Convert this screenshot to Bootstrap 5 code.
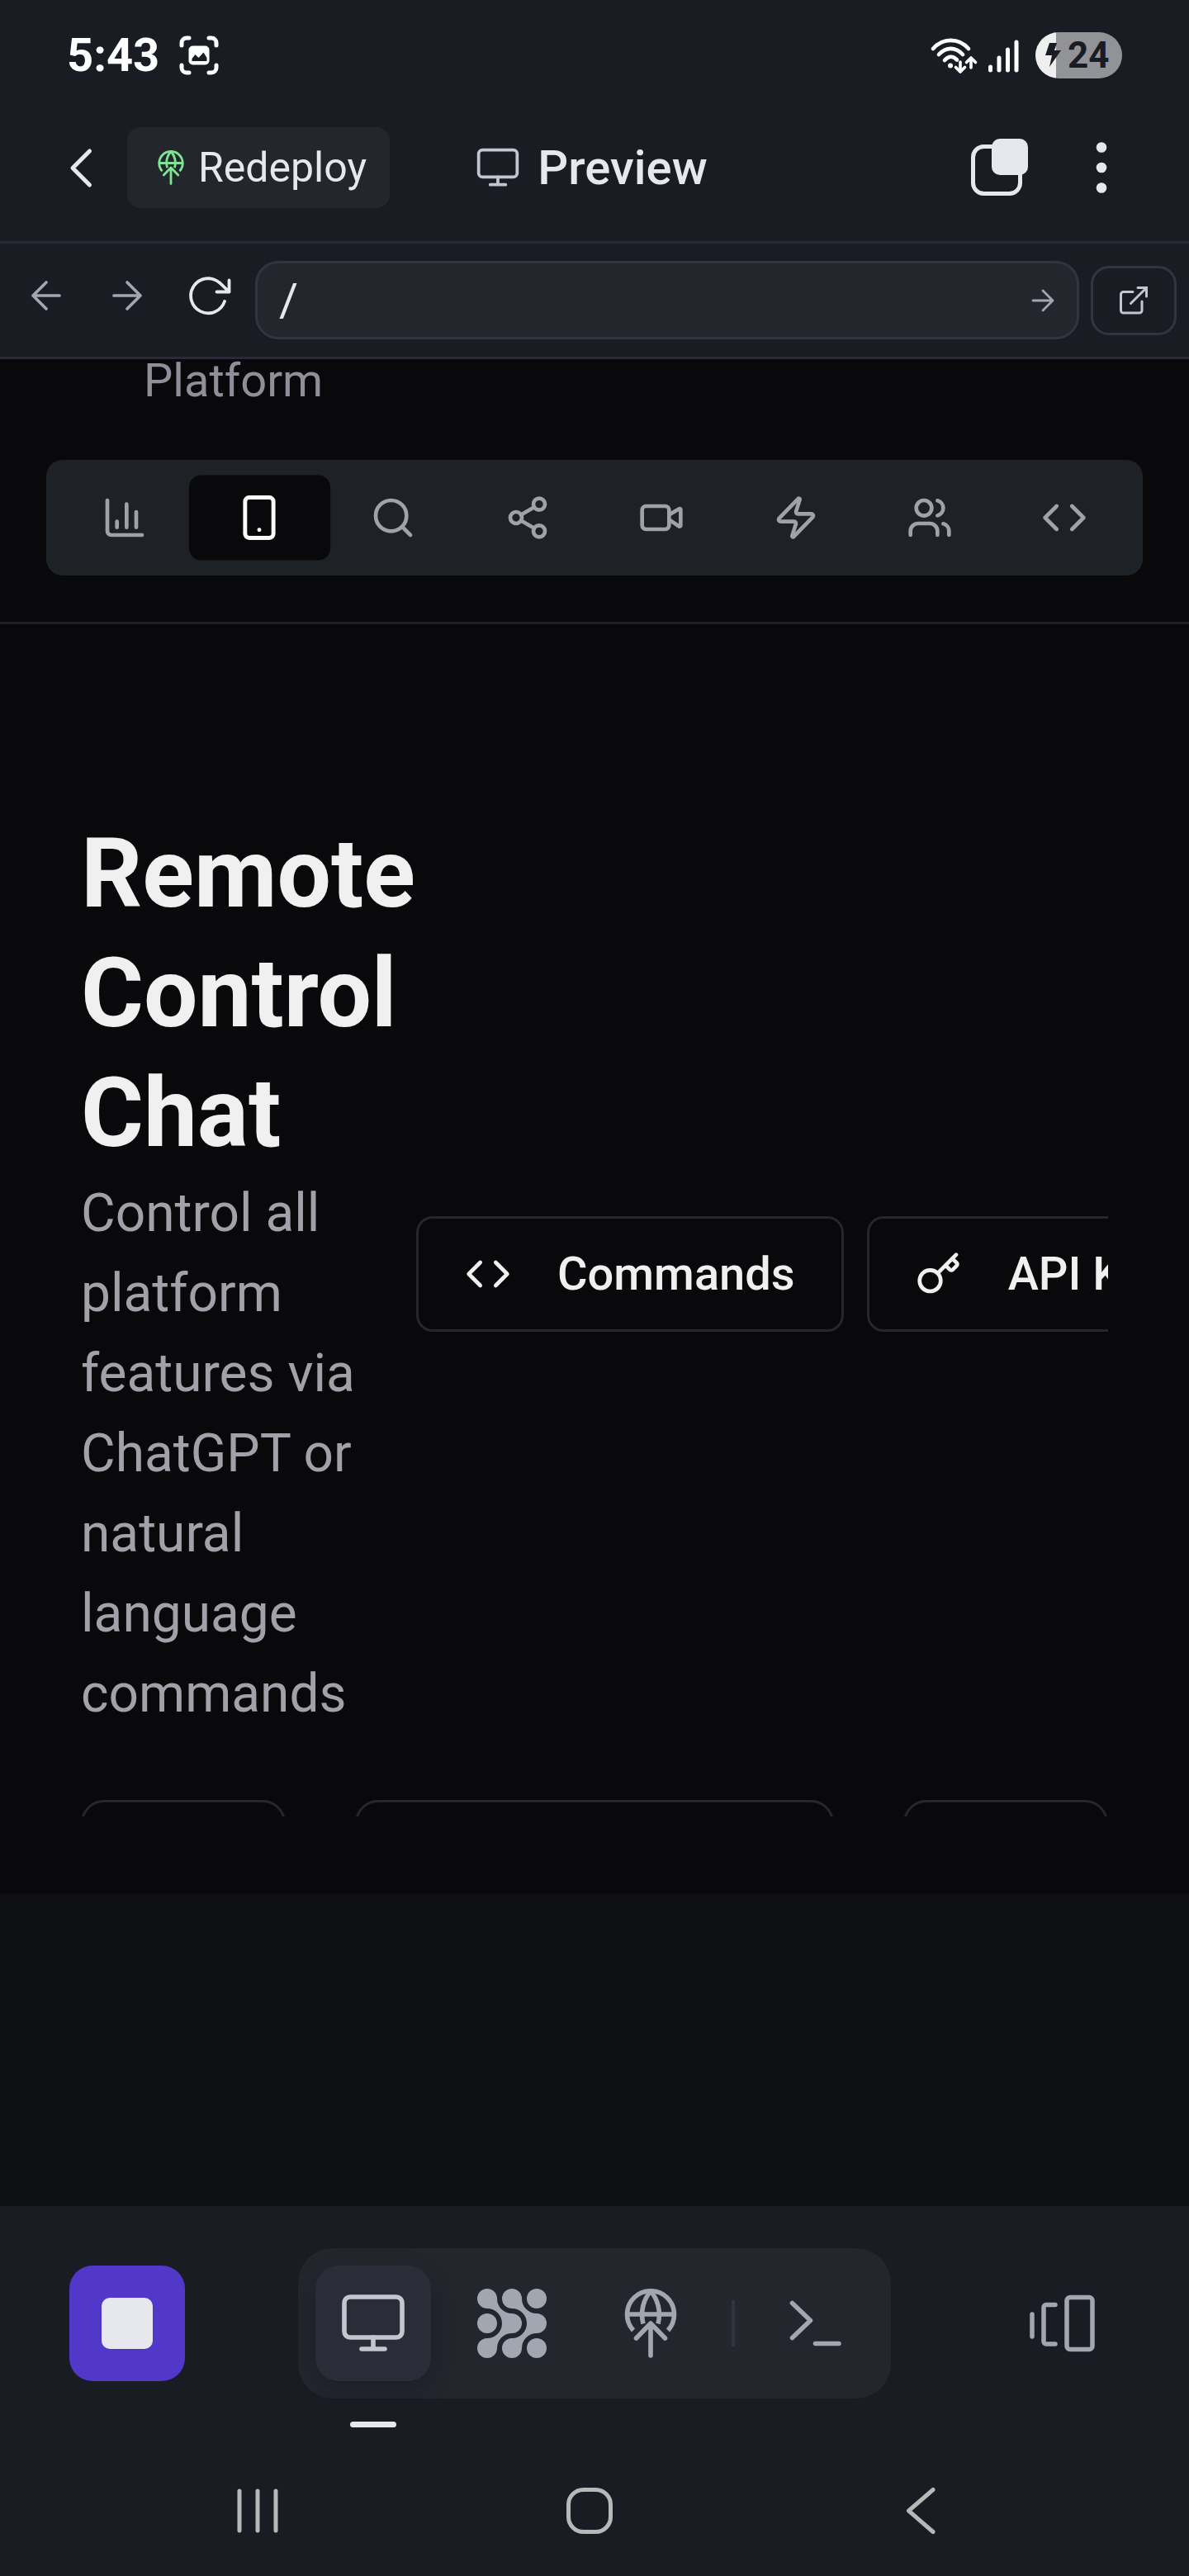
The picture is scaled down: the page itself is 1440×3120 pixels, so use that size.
<!DOCTYPE html>
<html lang="en" data-bs-theme="dark">
<head>
<meta charset="utf-8">
<meta name="viewport" content="width=device-width, initial-scale=1">
<title>Preview</title>
<link href="https://cdn.jsdelivr.net/npm/bootstrap@5.3.0/dist/css/bootstrap.min.css" rel="stylesheet">
<style>
  :root { --chrome:#1a1c24; --raised:#24262e; --line:#282a35; --outline:#32343f; --ink:#e6e8ee; --soft:#c3c6cf; --dim:#a1a6b1; --page:#09090b; }
  body { font-family: Roboto, "Liberation Sans", sans-serif; background:#0e0f11; color:var(--ink); font-size:56px; line-height:1; }
  svg { display:block; flex:none; }
  .stroked { fill:none; stroke:currentColor; stroke-linecap:round; stroke-linejoin:round; }
  .i56 { width:56px; height:56px; }
  .i84 { width:84px; height:84px; }
  .plain { border:0; padding:0; background:none; color:inherit; display:flex; align-items:center; justify-content:center; }
  .chrome { background:var(--chrome); }

  .status { height:134px; padding:0 81px; color:#fff; }
  .clock { font-weight:700; }
  .battery { width:105px; height:56px; margin-left:20px; border-radius:28px; background:linear-gradient(90deg,#efefef 25px,#929397 25px); color:var(--chrome); font-size:44px; font-weight:700; padding-left:11px; gap:8px; }

  .topbar { padding:20px 78px 40px 70px; border-bottom:3px solid var(--line); }
  .topbar .side { flex:1 1 0; }
  .side-left { gap:28px; }
  .side-right { gap:60px; }
  .redeploy { height:98px; gap:12px; padding:0 28px 0 32px; border:0; border-radius:16px; background:var(--raised); color:var(--ink); font-size:50px; line-height:1; }
  .redeploy svg { width:42px; height:42px; color:#7ee494; }
  .pane-title { font-size:58px; font-weight:500; margin:0; gap:20px; line-height:1; color:var(--ink); }
  .pane-title svg { color:var(--soft); }

  .urlbar { padding:21px 15px 21px 28px; border-bottom:3px solid var(--line); gap:14px; }
  .history { gap:42px; padding:0 15px 12px 0; color:var(--dim); }
  .history .reload { color:var(--ink); }
  .address { height:95px; border:3px solid var(--outline); border-radius:28px; background:var(--raised); padding:0 18px 0 26px; }
  .address input { border:0; outline:0; background:none; color:var(--ink); font-size:56px; line-height:64px; padding:0; min-width:0; }
  .address .plain { color:var(--dim); }
  .popout { width:104px; height:84px; border:3px solid var(--outline); border-radius:22px; color:var(--soft); }

  .site { background:var(--page); }
  .site-head { padding:0 56px 56px; border-bottom:3px solid #1e2024; }
  .tagline { margin:0 0 70px; padding-left:118px; font-size:56px; line-height:52px; color:#8f8f99; }
  .tabs { height:140px; padding:0 14px; border-radius:20px; background:#1e2125; color:#a1a1aa; }
  .tabs button { flex:1 1 0; height:98px; border-radius:14px; }
  .tabs .on { background:var(--page); color:#fafafa; transform:scale(1.05); }

  .hero { padding:230px 98px 94px; }
  .hero-row { overflow:hidden; }
  .hero-copy { width:406px; flex:none; }
  .hero h1 { font-size:116px; line-height:145px; font-weight:700; color:#f0f0f0; margin:0; }
  .hero p { font-size:64px; line-height:97px; color:#a1a1aa; margin:0; }
  .hero-actions { gap:28px; }
  .act { height:140px; padding:0 56px; gap:56px; border:3px solid #27272a; border-radius:20px; background:none; color:#f0f0f0; font-size:56px; font-weight:500; line-height:1; white-space:nowrap; flex:none; }
  .panels { margin-top:80px; height:20px; overflow:hidden; gap:84px; }
  .panel { height:120px; border:3px solid #27272a; border-radius:28px; flex:0 0 248px; }
  .panel-wide { flex:1 1 0; }

  .tools { padding:51px 84px 57px; }
  .sq { width:140px; height:140px; border-radius:28px; color:var(--dim); }
  .stop { background:#5138c8; }
  .dock { padding:21px; gap:28px; border-radius:42px; background:var(--raised); }
  .dock .on { position:relative; background:#2b2c37; color:var(--soft); box-shadow:0 10px 28px rgba(14,14,22,.3); }
  .dock .on::after { content:""; position:absolute; left:42px; top:189px; width:56px; height:7px; border-radius:4px; background:var(--ink); }
  .rule { width:4px; height:56px; background:var(--outline); }
  .sysnav { height:158px; padding:0 123px 0 111px; color:#b8b8b8; }
  .sysnav button { flex:1 1 0; height:100%; }
</style>
<script defer src="https://cdn.jsdelivr.net/npm/bootstrap@5.3.0/dist/js/bootstrap.bundle.min.js"></script>
</head>
<body class="d-flex flex-column min-vh-100">

<svg class="d-none" aria-hidden="true">
  <symbol id="globe-up" viewBox="0 0 84 84"><g class="stroked" stroke-width="5.6"><path d="M21 50.500A28.500 28.500 0 1 1 63 50.500" stroke-linecap="butt"/><path d="M33 42.500C29 27 34 12 42 3C50 12 55 27 51 42.500" stroke-linecap="butt"/><path d="M14 31H70"/><path d="M42 81V43M24.500 60L42 42L59.500 60"/></g></symbol>
  <symbol id="monitor" viewBox="0 0 84 84"><g class="stroked" stroke-width="5.600"><rect x="7" y="10" width="70" height="49" rx="7"/><path d="M42 59V73M28 73H56"/></g></symbol>
  <symbol id="code" viewBox="0 0 24 24"><path class="stroked" stroke-width="2" d="M16 18l6-6-6-6M8 6l-6 6 6 6"/></symbol>
</svg>

<div class="chrome">
  <div class="status d-flex justify-content-between align-items-center">
    <div class="d-flex align-items-center gap-4">
      <span class="clock">5:43</span>
      <svg width="48" height="48" viewBox="0 0 48 48" role="img" aria-label="Screenshot saved"><path class="stroked" stroke-width="5" d="M3 12V9a6 6 0 0 1 6-6h3M36 3h3a6 6 0 0 1 6 6v3M45 36v3a6 6 0 0 1-6 6h-3M12 45H9a6 6 0 0 1-6-6v-3"/><rect x="11.500" y="12.500" width="25" height="23" rx="5" fill="currentColor"/><path fill="#1a1c24" d="M15.500 31v-3l4-5 4 4 6-6.500 4 6.500v4z"/></svg>
    </div>
    <div class="d-flex align-items-center">
      <svg class="me-2" width="62" height="46" viewBox="0 0 62 46" role="img" aria-label="Wi-Fi"><g class="stroked" stroke-width="4.600"><path d="M4 15C16 1.500 35 1.500 47 15M11 22C20 12.500 31 12.500 40 22M18 29C23 23.500 28 23.500 33 28.500"/><g stroke-width="3.600"><path d="M37 31V42M31.500 37.500l5.500 5.500 5.500-5.500M50 38V27M44.500 31.500L50 26l5.500 5.500"/></g></g><circle cx="25" cy="35.500" r="3" fill="currentColor"/></svg>
      <svg width="38" height="46" viewBox="0 0 38 46" role="img" aria-label="Signal"><path class="stroked" stroke-width="5" d="M3.500 37v4M14 26v15M24.500 16v25M35 7v34"/></svg>
      <div class="battery d-flex align-items-center">
        <svg width="20" height="32" viewBox="0 0 20 32" aria-hidden="true"><path fill="currentColor" d="M6 1h9l-3 9h8L6 30l3-14H1z"/></svg><span>24</span>
      </div>
    </div>
  </div>

  <header class="topbar d-flex align-items-center">
    <div class="side side-left d-flex align-items-center">
      <button class="plain" aria-label="Back"><svg class="i56 stroked" viewBox="0 0 56 56" stroke-width="5"><path d="M38.500 8L18 28.500L38.500 49"/></svg></button>
      <button class="redeploy d-flex align-items-center"><svg><use href="#globe-up"/></svg>Redeploy</button>
    </div>
    <h2 class="pane-title d-flex align-items-center"><svg class="i56"><use href="#monitor"/></svg>Preview</h2>
    <div class="side side-right d-flex align-items-center justify-content-end">
      <button class="plain" aria-label="Tabs"><svg width="70" height="70" viewBox="0 0 70 70"><rect class="stroked" x="2.500" y="9.500" width="57" height="57" rx="13" stroke-width="5"/><rect x="25" y="0" width="44" height="44" rx="10" fill="currentColor"/></svg></button>
      <button class="plain" aria-label="More"><svg width="56" height="64" viewBox="0 0 56 64" fill="currentColor"><circle cx="28" cy="7.500" r="6.300"/><circle cx="28" cy="32" r="6.300"/><circle cx="28" cy="56.500" r="6.300"/></svg></button>
    </div>
  </header>

  <div class="urlbar d-flex align-items-center">
    <div class="history d-flex">
      <button class="plain" aria-label="Go back"><svg class="i56 stroked" viewBox="0 0 56 56" stroke-width="3.700"><path d="M44 28H12M28 12L12 28L28 44"/></svg></button>
      <button class="plain" aria-label="Go forward"><svg class="i56 stroked" viewBox="0 0 56 56" stroke-width="3.700"><path d="M12 28H44M28 12L44 28L28 44"/></svg></button>
      <button class="plain reload" aria-label="Reload"><svg class="i56 stroked" viewBox="0 0 56 56" stroke-width="3.800"><path d="M48 35A21 21 0 1 1 42 12.500L53.500 23.500M38.500 23.500H53.500M53.500 9.500V23.500" stroke-linejoin="miter"/></svg></button>
    </div>
    <form class="address d-flex align-items-center flex-grow-1">
      <input class="flex-grow-1" type="text" value="/" aria-label="Page path">
      <button class="plain" type="button" aria-label="Open path"><svg width="42" height="42" viewBox="0 0 42 42" class="stroked" stroke-width="2.800"><path d="M7 21H31M19 9L31 21L19 33"/></svg></button>
    </form>
    <button class="plain popout" aria-label="Open in new tab"><svg width="42" height="42" viewBox="0 0 42 42" class="stroked" stroke-width="3"><path d="M20 10.500H8.500a3 3 0 0 0-3 3V33a3 3 0 0 0 3 3H28a3 3 0 0 0 3-3V22M17.500 24.500L36.500 5.500M26 5.500H36.500V16" stroke-linejoin="miter"/></svg></button>
  </div>
</div>

<main class="site">
  <div class="site-head">
    <p class="tagline">Platform</p>
    <nav class="tabs d-flex align-items-center" aria-label="Sections">
      <button class="plain" aria-label="Analytics"><svg class="i56 stroked" viewBox="0 0 24 24" stroke-width="2"><path d="M3 3v16a2 2 0 0 0 2 2h16M18 17V9M13 17V5M8 17v-3"/></svg></button>
      <button class="plain on" aria-label="Mobile" aria-current="page"><svg class="i56 stroked" viewBox="0 0 24 24" stroke-width="2"><rect x="5" y="2" width="14" height="20" rx="2"/><path d="M12 18h.01"/></svg></button>
      <button class="plain" aria-label="Search"><svg class="i56 stroked" viewBox="0 0 24 24" stroke-width="2"><circle cx="11" cy="11" r="8"/><path d="m21 21-4.300-4.300"/></svg></button>
      <button class="plain" aria-label="Share"><svg class="i56 stroked" viewBox="0 0 24 24" stroke-width="2"><circle cx="18" cy="5" r="3"/><circle cx="6" cy="12" r="3"/><circle cx="18" cy="19" r="3"/><path d="M8.590 13.510l6.830 3.980M15.410 6.510l-6.820 3.980"/></svg></button>
      <button class="plain" aria-label="Video"><svg class="i56 stroked" viewBox="0 0 24 24" stroke-width="2"><path d="m16 13 5.223 3.482a.5.5 0 0 0 .777-.416V7.870a.5.5 0 0 0-.752-.432L16 10.500"/><rect x="2" y="6" width="14" height="12" rx="2"/></svg></button>
      <button class="plain" aria-label="Automation"><svg class="i56 stroked" viewBox="0 0 24 24" stroke-width="2"><path d="M4 14a1 1 0 0 1-.78-1.630l9.900-10.200a.5.5 0 0 1 .86.460l-1.920 6.020A1 1 0 0 0 13 10h7a1 1 0 0 1 .78 1.630l-9.900 10.200a.5.5 0 0 1-.86-.460l1.920-6.020A1 1 0 0 0 11 14z"/></svg></button>
      <button class="plain" aria-label="Users"><svg class="i56 stroked" viewBox="0 0 24 24" stroke-width="2"><path d="M16 21v-2a4 4 0 0 0-4-4H6a4 4 0 0 0-4 4v2"/><circle cx="9" cy="7" r="4"/><path d="M22 21v-2a4 4 0 0 0-3-3.870M16 3.130a4 4 0 0 1 0 7.750"/></svg></button>
      <button class="plain" aria-label="Developer"><svg class="i56"><use href="#code"/></svg></button>
    </nav>
  </div>

  <section class="hero">
    <div class="hero-row d-flex align-items-center">
      <div class="hero-copy">
        <h1>Remote Control Chat</h1>
        <p>Control all platform features via ChatGPT or natural language commands</p>
      </div>
      <div class="hero-actions d-flex">
        <button class="act d-flex align-items-center"><svg class="i56"><use href="#code"/></svg>Commands</button>
        <button class="act d-flex align-items-center"><svg class="i56 stroked" viewBox="0 0 24 24" stroke-width="2"><path d="m15.500 7.500 2.300 2.300a1 1 0 0 0 1.400 0l2.100-2.100a1 1 0 0 0 0-1.400L19 4M21 2l-9.600 9.600"/><circle cx="7.500" cy="15.500" r="5.500"/></svg>API Keys</button>
      </div>
    </div>
    <div class="panels d-flex">
      <div class="panel"></div>
      <div class="panel panel-wide"></div>
      <div class="panel"></div>
    </div>
  </section>
</main>

<footer class="chrome mt-auto">
  <div class="tools d-flex align-items-center justify-content-between">
    <button class="plain sq stop" aria-label="Stop"><svg width="62" height="62" viewBox="0 0 62 62"><rect width="62" height="62" rx="10" fill="#e6e8ee"/></svg></button>
    <div class="dock d-flex align-items-center">
      <button class="plain sq on" aria-label="Preview"><svg class="i84"><use href="#monitor"/></svg></button>
      <button class="plain sq" aria-label="Agent"><svg class="i84" viewBox="0 0 84 84" fill="currentColor"><path d="M24 12A18 18 0 0 0 42 30A12 12 0 0 1 42 54A18 18 0 0 0 24 72A12 12 0 1 1 12 60A18 18 0 0 0 30 42A18 18 0 0 0 12 24A12 12 0 1 1 24 12ZM54 12A18 18 0 0 0 72 30A12 12 0 0 1 72 54A18 18 0 0 0 54 72A12 12 0 1 1 42 60A18 18 0 0 0 60 42A18 18 0 0 0 42 24A12 12 0 1 1 54 12Z"/><circle cx="72" cy="12" r="12"/><circle cx="12" cy="42" r="12"/><circle cx="72" cy="72" r="12"/></svg></button>
      <button class="plain sq" aria-label="Deploy"><svg class="i84"><use href="#globe-up"/></svg></button>
      <span class="rule"></span>
      <button class="plain sq" aria-label="Shell"><svg class="i84 stroked" viewBox="0 0 84 84" stroke-width="5.500"><path d="M13.500 17.500L35.500 38.500L13.500 59.500M41.500 66.500H70"/></svg></button>
    </div>
    <button class="plain sq" aria-label="All tabs"><svg class="i84 stroked" viewBox="0 0 84 84" stroke-width="5.500"><path d="M6 31V58M34 19.500H23a3 3 0 0 0-3 3V64a3 3 0 0 0 3 3H34"/><rect x="48" y="10.500" width="31" height="63" rx="4"/></svg></button>
  </div>
  <nav class="sysnav d-flex align-items-center" aria-label="System">
    <button class="plain" aria-label="Recent apps"><svg width="56" height="58" viewBox="0 0 56 58" class="stroked" stroke-width="5"><path d="M6 5V53M28 5V53M50 5V53"/></svg></button>
    <button class="plain" aria-label="Home"><svg width="58" height="58" viewBox="0 0 58 58" class="stroked" stroke-width="5"><rect x="3.500" y="3.500" width="51" height="51" rx="18"/></svg></button>
    <button class="plain" aria-label="System back"><svg width="58" height="58" viewBox="0 0 58 58" class="stroked" stroke-width="5"><path d="M43 3.500L13.500 29L43 54.500"/></svg></button>
  </nav>
</footer>
</body>
</html>
